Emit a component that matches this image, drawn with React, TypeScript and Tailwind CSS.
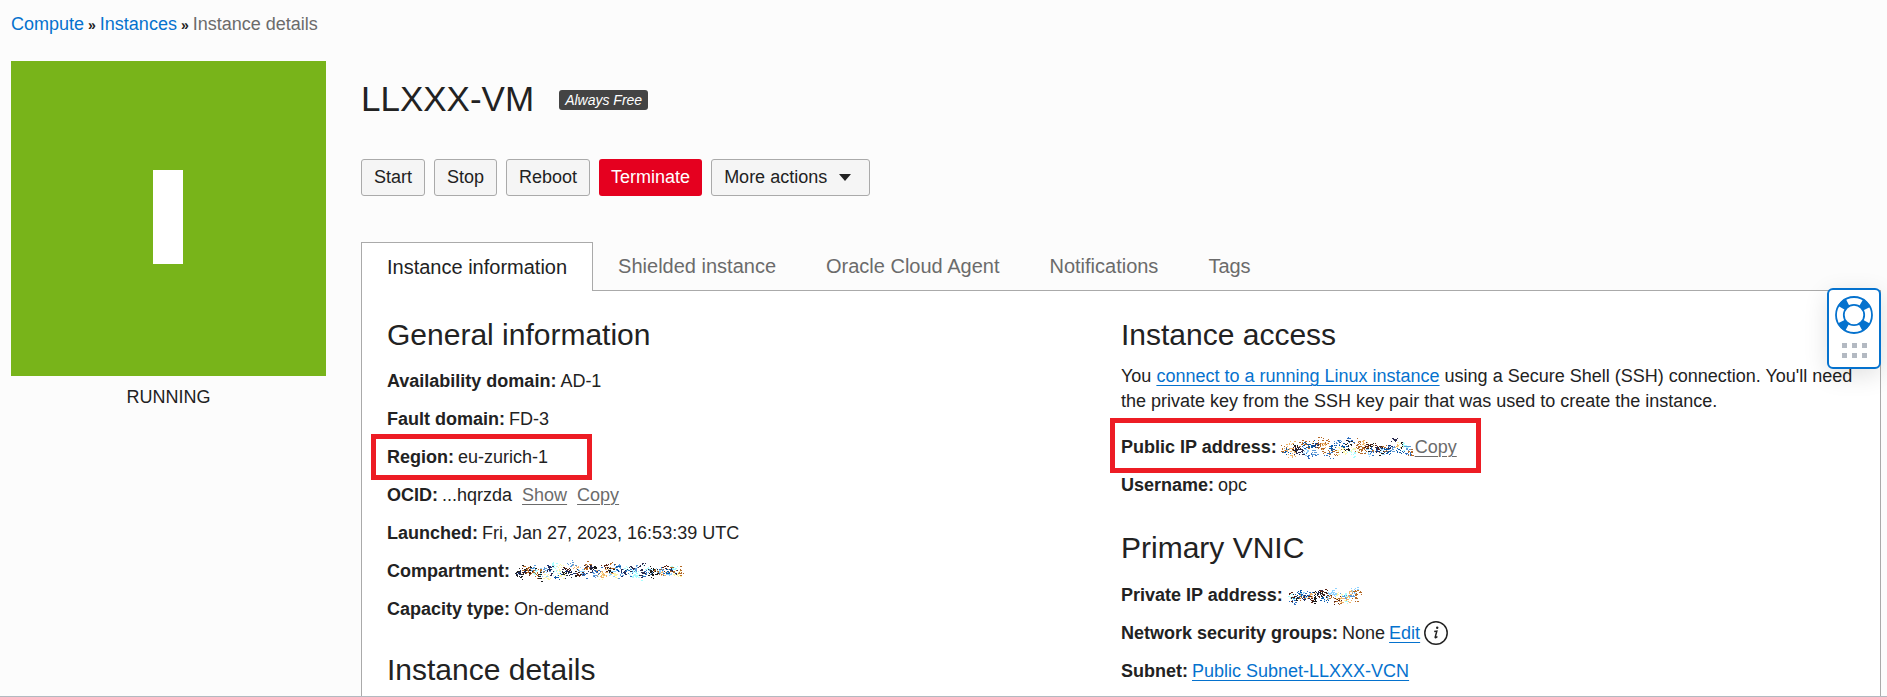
import type { ReactNode } from "react";

const INK = ["#1b1b1b", "#222222", "#2c2c50", "#0a58a8", "#2f6fc0", "#5c9ad8", "#8fd3ff", "#f0b36a", "#b46a28", "#b46a28", "#5a2417", "#a8ffff", "#fff7a8", "#1a2f6b"];

/** Scattered clusters of pixels that hide a confidential value. */
function Redacted({ width, height, seed, label }: { width: number; height: number; seed: number; label: string }) {
  let state = seed;
  const next = () => {
    state = (state * 16807) % 2147483647;
    return state / 2147483647;
  };
  for (let i = 0; i < 8; i++) next();
  const blobs: { color: string; d: string }[] = [];
  for (let x = 3; x < width - 3; x += 2) {
    const cy = height / 2 + (next() + next() - 1) * height * 0.36;
    let d = "";
    for (let i = 0; i < 11; i++) {
      const px = Math.round(x + (next() + next() + next() - 1.5) * 4);
      const py = Math.round(cy + (next() + next() + next() - 1.5) * 4);
      d += `M${px} ${py}h1v1h-1z`;
      if (next() < 0.4) d += `M${px + 1} ${py}h1v1h-1z`;
    }
    blobs.push({ color: INK[Math.floor(next() * INK.length)], d });
  }
  return (
    <svg role="img" aria-label={label} width={width} height={height} viewBox={`0 0 ${width} ${height}`} shapeRendering="crispEdges" className="inline-block shrink-0">
      {blobs.map((blob, i) => (
        <path key={i} d={blob.d} fill={blob.color} />
      ))}
    </svg>
  );
}

function Field({ label, children, marked }: { label: string; children: ReactNode; marked?: string }) {
  return (
    <div className="relative flex h-[38px] items-center gap-1">
      <dt className="font-bold">{label}:</dt>
      <dd className="flex items-center">{children}</dd>
      {marked && <span className={`pointer-events-none absolute border-[5px] border-[#ed1c24] ${marked}`} />}
    </div>
  );
}

function Heading({ children }: { children: ReactNode }) {
  return <h2 className="text-[30px] leading-[38px]">{children}</h2>;
}

const blueLink = "text-[#0572ce] underline decoration-1 underline-offset-[3px]";
const greyLink = "text-[#6b6b6b] underline decoration-1 underline-offset-[3px]";
const button = "h-[37px] rounded-[3px] border border-[#aaaaaa] bg-[#f5f5f5] px-3";

function Lifebuoy() {
  return (
    <svg width="38" height="38" viewBox="0 0 38 38" fill="none" stroke="#0572ce" aria-hidden="true">
      <circle cx="19" cy="19" r="14.3" strokeWidth="8.4" strokeDasharray="8.2 14.26" strokeDashoffset="-7.13" />
      <circle cx="19" cy="19" r="18" strokeWidth="1.8" />
      <circle cx="19" cy="19" r="10.2" strokeWidth="1.8" />
    </svg>
  );
}

export default function App() {
  return (
    <div className="relative flex h-screen flex-col overflow-hidden border-b border-[#b3b9c0] bg-[#fcfcfc] font-['Liberation_Sans',Arial,sans-serif] text-[18px] leading-[25px] text-[#222222]">
      <nav aria-label="Breadcrumb" className="flex items-center px-[11px] pt-3">
        <a href="#compute" className="text-[#0572ce]">Compute</a>
        <span className="px-1 text-sm font-bold">»</span>
        <a href="#instances" className="text-[#0572ce]">Instances</a>
        <span className="px-1 text-sm font-bold">»</span>
        <span className="text-[#6b6b6b]">Instance details</span>
      </nav>

      <div className="flex min-h-0 flex-1 gap-[35px] pl-[11px] pr-[6px] pt-6">
        <aside className="w-[315px] shrink-0 text-center">
          <div className="flex aspect-square items-center justify-center bg-[#78b41a] pb-1 pr-px">
            <div className="h-[94px] w-[30px] bg-white" />
          </div>
          <p className="pt-[9px]">RUNNING</p>
        </aside>

        <main className="flex min-w-0 flex-1 flex-col">
          <div className="flex items-center gap-[25px] pt-[17px]">
            <h1 className="text-[35px] leading-[42px]">LLXXX-VM</h1>
            <span className="mt-[2px] rounded-[3px] bg-[#444444] px-[6px] text-sm italic text-white">Always Free</span>
          </div>

          <div className="flex gap-[9px] pt-[39px]">
            <button type="button" className={button}>Start</button>
            <button type="button" className={button}>Stop</button>
            <button type="button" className={button}>Reboot</button>
            <button type="button" className="h-[37px] rounded-[3px] bg-[#e5001f] px-3 text-white">Terminate</button>
            <button type="button" className={`flex items-center gap-3 pr-[18px] ${button}`}>
              More actions
              <svg width="12" height="7" viewBox="0 0 12 7" aria-hidden="true">
                <path d="M0 0h12L6 7z" fill="#222222" />
              </svg>
            </button>
          </div>

          <div role="tablist" className="mt-[46px] flex h-12 shrink-0 text-[20px]">
            <button type="button" role="tab" aria-selected="true" className="z-10 -mb-px border border-b-0 border-[#aaaaaa] bg-white px-[25px]">Instance information</button>
            <button type="button" role="tab" aria-selected="false" className="px-[25px] text-[#6b6b6b]">Shielded instance</button>
            <button type="button" role="tab" aria-selected="false" className="px-[25px] text-[#6b6b6b]">Oracle Cloud Agent</button>
            <button type="button" role="tab" aria-selected="false" className="px-[25px] text-[#6b6b6b]">Notifications</button>
            <button type="button" role="tab" aria-selected="false" className="px-[25px] text-[#6b6b6b]">Tags</button>
          </div>

          <div role="tabpanel" className="grid min-h-0 flex-1 grid-cols-2 border border-b-0 border-[#aaaaaa] bg-white px-[25px] pt-[25px]">
            <section>
              <Heading>General information</Heading>
              <dl className="pb-[23px] pt-2">
                <Field label="Availability domain">AD-1</Field>
                <Field label="Fault domain">FD-3</Field>
                <Field label="Region" marked="-left-4 -top-1 h-[46px] w-[221px]">eu-zurich-1</Field>
                <Field label="OCID">
                  ...hqrzda
                  <a href="#show" className={`ml-[10px] ${greyLink}`}>Show</a>
                  <a href="#copy" className={`ml-[10px] ${greyLink}`}>Copy</a>
                </Field>
                <Field label="Launched">Fri, Jan 27, 2023, 16:53:39 UTC</Field>
                <Field label="Compartment">
                  <Redacted width={170} height={22} seed={7} label="Compartment hidden" />
                </Field>
                <Field label="Capacity type">On-demand</Field>
              </dl>
              <Heading>Instance details</Heading>
            </section>

            <section>
              <Heading>Instance access</Heading>
              <p className="pb-[14px] pt-[10px]">
                You <a href="#connect" className={blueLink}>connect to a running Linux instance</a> using a Secure Shell (SSH) connection. You'll need the private key from the SSH key pair that was used to create the instance.
              </p>
              <dl className="pb-[25px]">
                <Field label="Public IP address" marked="-left-[11px] -top-[10px] h-[55px] w-[371px]">
                  <Redacted width={134} height={23} seed={23} label="Public IP address hidden" />
                  <a href="#copy-ip" className={greyLink}>Copy</a>
                </Field>
                <Field label="Username">opc</Field>
              </dl>
              <Heading>Primary VNIC</Heading>
              <dl className="pt-[9px]">
                <Field label="Private IP address">
                  <Redacted width={76} height={19} seed={41} label="Private IP address hidden" />
                </Field>
                <Field label="Network security groups">
                  None
                  <a href="#edit" className={`ml-1 ${blueLink}`}>Edit</a>
                  <button type="button" aria-label="About network security groups" className="ml-1">
                    <svg width="24" height="24" viewBox="0 0 24 24" aria-hidden="true">
                      <circle cx="12" cy="12" r="11.2" fill="none" stroke="#222222" strokeWidth="1.5" />
                      <circle cx="13.2" cy="6.8" r="1.2" fill="#222222" />
                      <path d="M10.2 10.6l2.6-.5-1.6 6q-.3 1.5 2.2-.6" fill="none" stroke="#222222" strokeWidth="1.5" />
                    </svg>
                  </button>
                </Field>
                <Field label="Subnet">
                  <a href="#subnet" className={blueLink}>Public Subnet-LLXXX-VCN</a>
                </Field>
              </dl>
            </section>
          </div>
        </main>
      </div>

      <button type="button" aria-label="Help" className="absolute right-[6px] top-[288px] z-20 flex h-[81px] w-[54px] flex-col items-center gap-[9px] rounded-md border-2 border-[#0572ce] bg-white pt-[6px] shadow-[0_6px_24px_rgba(0,0,0,0.12)]">
        <Lifebuoy />
        <span className="grid grid-cols-3 gap-[5px]">
          {[0, 1, 2, 3, 4, 5].map((dot) => (
            <span key={dot} className="size-[5px] bg-[#b3b9c2]" />
          ))}
        </span>
      </button>
    </div>
  );
}
